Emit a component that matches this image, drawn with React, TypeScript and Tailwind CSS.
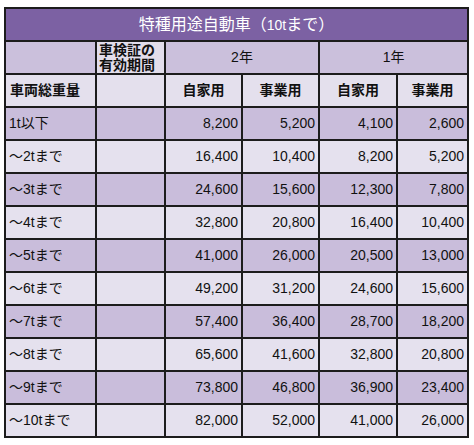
const rows: [string, string, string, string, string][] = [
  ["1t以下", "8,200", "5,200", "4,100", "2,600"],
  ["～2tまで", "16,400", "10,400", "8,200", "5,200"],
  ["～3tまで", "24,600", "15,600", "12,300", "7,800"],
  ["～4tまで", "32,800", "20,800", "16,400", "10,400"],
  ["～5tまで", "41,000", "26,000", "20,500", "13,000"],
  ["～6tまで", "49,200", "31,200", "24,600", "15,600"],
  ["～7tまで", "57,400", "36,400", "28,700", "18,200"],
  ["～8tまで", "65,600", "41,600", "32,800", "20,800"],
  ["～9tまで", "73,800", "46,800", "36,900", "23,400"],
  ["～10tまで", "82,000", "52,000", "41,000", "26,000"],
];

const cell = "border-2 border-[#1c1c1c] p-0";

export default function App() {
  return (
    <div className="min-h-[445px] bg-white pl-[4px] pt-[7px] font-['Liberation_Sans','Noto_Sans_CJK_JP',sans-serif] text-[14px] text-[#111]">
      <table className="w-[463px] table-fixed border-collapse border-2 border-[#111]">
        <colgroup>
          <col className="w-[91px]" />
          <col className="w-[69px]" />
          <col className="w-[77px]" />
          <col className="w-[77px]" />
          <col className="w-[78px]" />
          <col className="w-[71px]" />
        </colgroup>
        <thead>
          {/* title */}
          <tr className="h-[33px] bg-[#7c61a3]">
            <th colSpan={6} className={`${cell} text-center text-[16px] font-normal text-white`}>
              特種用途自動車（<span className="text-[14px]">10t</span>まで）
            </th>
          </tr>
          <tr className="h-[33px] bg-[#cbc0dc]">
            <th className={cell}></th>
            <th className={`${cell} bg-[#e2ddeb] pl-[2px] text-left align-middle leading-[15px] font-bold`}>
              車検証の
              <br />
              有効期間
            </th>
            <th colSpan={2} className={`${cell} text-center font-normal`}>
              2年
            </th>
            <th colSpan={2} className={`${cell} text-center font-normal`}>
              1年
            </th>
          </tr>
          <tr className="h-[33px] bg-[#e4e0ed]">
            <th className={`${cell} pl-[4px] text-left font-bold`}>車両総重量</th>
            <th className={cell}></th>
            <th className={`${cell} text-center font-bold`}>自家用</th>
            <th className={`${cell} text-center font-bold`}>事業用</th>
            <th className={`${cell} text-center font-bold`}>自家用</th>
            <th className={`${cell} text-center font-bold`}>事業用</th>
          </tr>
        </thead>
        <tbody>
          {rows.map((r, i) => (
            <tr
              key={r[0]}
              className={`h-[33px] ${i % 2 === 0 ? "bg-[#c9bddb]" : "bg-[#e5e1ee]"}`}
            >
              <td className={`${cell} pl-[3px] text-left`}>{r[0]}</td>
              <td className={cell}></td>
              {r.slice(1).map((v, j) => (
                <td key={j} className={`${cell} pr-[3px] text-right`}>
                  {v}
                </td>
              ))}
            </tr>
          ))}
        </tbody>
      </table>
    </div>
  );
}
